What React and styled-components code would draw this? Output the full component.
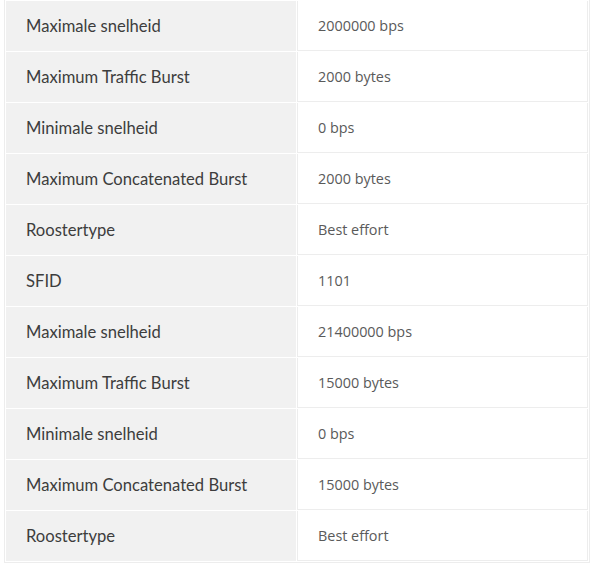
import styled, { createGlobalStyle } from 'styled-components';

const rows = [
  ['Maximale snelheid', '2000000 bps'],
  ['Maximum Traffic Burst', '2000 bytes'],
  ['Minimale snelheid', '0 bps'],
  ['Maximum Concatenated Burst', '2000 bytes'],
  ['Roostertype', 'Best effort'],
  ['SFID', '1101'],
  ['Maximale snelheid', '21400000 bps'],
  ['Maximum Traffic Burst', '15000 bytes'],
  ['Minimale snelheid', '0 bps'],
  ['Maximum Concatenated Burst', '15000 bytes'],
  ['Roostertype', 'Best effort'],
];

export default function App() {
  return (
    <>
      <GlobalStyle />
      <Page>
        <Table>
          <tbody>
            {rows.map(([label, value], index) => (
              <tr key={index}>
                <Label>{label}</Label>
                <Value>{value}</Value>
              </tr>
            ))}
          </tbody>
        </Table>
      </Page>
    </>
  );
}

const GlobalStyle = createGlobalStyle`
  body {
    margin: 0;
    background: #fff;
  }
`;

const Page = styled.div`
  width: 604px;
  height: 572px;
  overflow: hidden;
  padding-left: 4px;
  box-sizing: border-box;
`;

const Table = styled.table`
  width: 586px;
  margin-top: -1px;
  border: 1px solid #ededed;
  border-collapse: separate;
  border-spacing: 1px;
  table-layout: fixed;
`;

const Label = styled.th`
  width: 290px;
  height: 50px;
  padding: 0 0 0 20px;
  box-sizing: border-box;
  background: #f1f1f1;
  text-align: left;
  font-family: 'Lato', sans-serif;
  font-weight: 400;
  font-size: 16.6px;
  color: #3d3d3d;
`;

const Value = styled.td`
  height: 50px;
  padding: 0 0 0 20px;
  box-sizing: border-box;
  border: 1px solid #ededed;
  border-top: none;
  font-family: 'Open Sans', sans-serif;
  font-size: 14.4px;
  color: #5a5a5a;
`;
